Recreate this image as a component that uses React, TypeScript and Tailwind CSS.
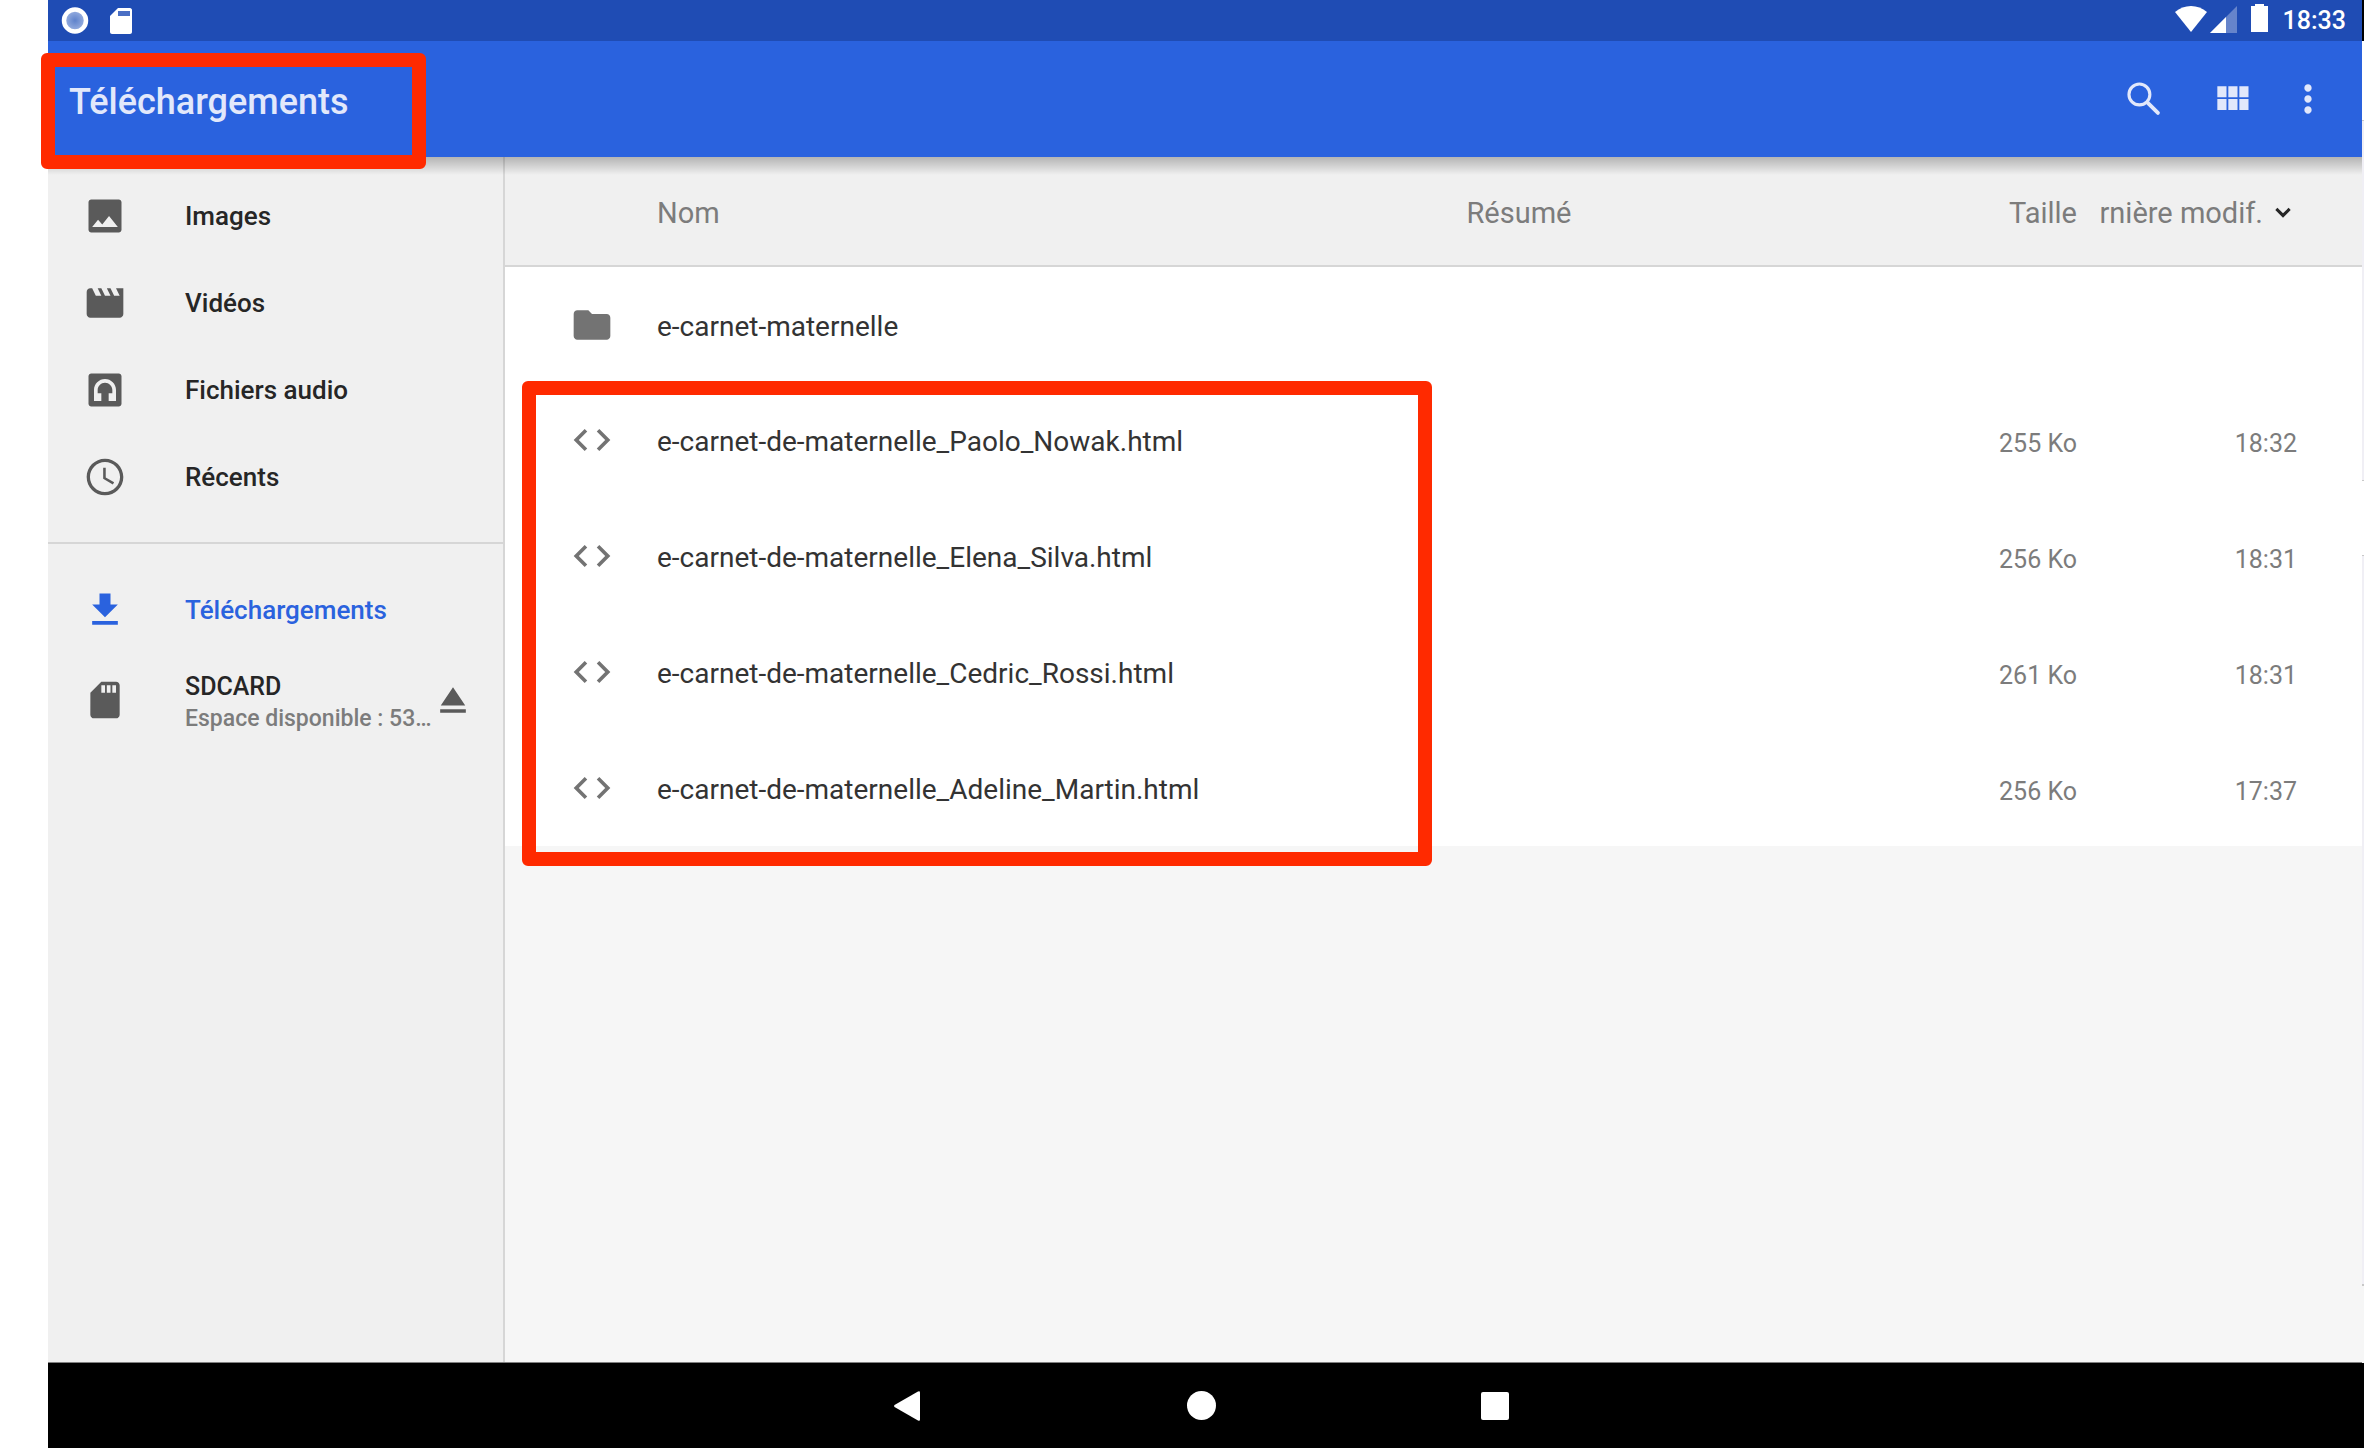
import type { ReactNode } from "react";

type IconProps = { d: string; className?: string };

function Icon({ d, className = "size-11" }: IconProps) {
  return (
    <svg viewBox="0 0 24 24" fill="currentColor" aria-hidden="true" className={`shrink-0 ${className}`}>
      <path d={d} />
    </svg>
  );
}

const icons = {
  photo:
    "M19.500 3h-15C3.700 3 3 3.700 3 4.500v15c0 .8.7 1.500 1.500 1.500h15c.8 0 1.500-.7 1.500-1.500v-15c0-.8-.7-1.500-1.500-1.500zM5 18l3.200-4 2.300 2.700 3.700-4.700L19 18H5z",
  movie: "M18 4l2 4h-3l-2-4h-2l2 4h-3l-2-4H8l2 4H7L5 4H4c-1.100 0-1.990.9-1.990 2L2 18c0 1.100.9 2 2 2h16c1.100 0 2-.9 2-2V4h-4z",
  audio:
    "M19.500 3h-15C3.700 3 3 3.700 3 4.500v15c0 .8.7 1.500 1.500 1.500h15c.8 0 1.500-.7 1.500-1.500v-15c0-.8-.7-1.500-1.500-1.500zM18 18h-4v-4.200h2V12c0-2.200-1.800-4-4-4s-4 1.800-4 4v1.800h2V18H6v-6c0-3.300 2.700-6 6-6s6 2.700 6 6v6z",
  recent:
    "M11.990 2C6.470 2 2 6.480 2 12s4.470 10 9.990 10C17.520 22 22 17.520 22 12S17.520 2 11.990 2zM12 20.200c-4.500 0-8.200-3.700-8.200-8.200s3.700-8.200 8.200-8.200 8.200 3.700 8.200 8.200-3.700 8.200-8.200 8.200zm.4-13.200H11v6l5.250 3.150.75-1.230-4.600-2.670z",
  download: "M19 9h-4V3H9v6H5l7 7 7-7zM5 18v2h14v-2H5z",
  sdcard: "M18 2h-8L4.020 8 4 20c0 1.100.9 2 2 2h12c1.100 0 2-.9 2-2V4c0-1.100-.9-2-2-2zm-6 6h-2V4h2v4zm3 0h-2V4h2v4zm3 0h-2V4h2v4z",
  eject: "M5 17h14v2H5zM12 5L5.330 15h13.340z",
  grid: "M4 11h5V5H4v6zm0 7h5v-6H4v6zm6 0h5v-6h-5v6zm6 0h5v-6h-5v6zm-6-7h5V5h-5v6zm6-6v6h5V5h-5z",
  more: "M12 8c1.100 0 2-.9 2-2s-.9-2-2-2-2 .9-2 2 .9 2 2 2zm0 2c-1.100 0-2 .9-2 2s.9 2 2 2 2-.9 2-2-.9-2-2-2zm0 6c-1.100 0-2 .9-2 2s.9 2 2 2 2-.9 2-2-.9-2-2-2z",
  folder: "M10 4H4c-1.100 0-1.990.9-1.990 2L2 18c0 1.100.9 2 2 2h16c1.100 0 2-.9 2-2V8c0-1.100-.9-2-2-2h-8l-2-2z",
  code: "M9.400 16.600L4.800 12l4.600-4.600L8 6l-6 6 6 6 1.400-1.400zm5.200 0l4.600-4.600-4.600-4.600L16 6l6 6-6 6-1.400-1.400z",
  chevron: "M7.200 7.600L12 12.200l4.800-4.600L18.600 9.500 12 16 5.400 9.500z",
};

const files = [
  { icon: icons.folder, name: "e-carnet-maternelle", size: "", date: "" },
  { icon: icons.code, name: "e-carnet-de-maternelle_Paolo_Nowak.html", size: "255 Ko", date: "18:32" },
  { icon: icons.code, name: "e-carnet-de-maternelle_Elena_Silva.html", size: "256 Ko", date: "18:31" },
  { icon: icons.code, name: "e-carnet-de-maternelle_Cedric_Rossi.html", size: "261 Ko", date: "18:31" },
  { icon: icons.code, name: "e-carnet-de-maternelle_Adeline_Martin.html", size: "256 Ko", date: "17:37" },
];

function StatusBar() {
  return (
    <div className="flex h-[41px] items-center bg-[#1f4cb4] pr-4 pl-3 text-white">
      <svg viewBox="0 0 30 30" className="size-[30px]" aria-hidden="true">
        <defs>
          <radialGradient id="dot">
            <stop offset="0" stopColor="#5f82cb" />
            <stop offset="1" stopColor="#9db3e2" />
          </radialGradient>
        </defs>
        <circle cx="15" cy="14.500" r="11" fill="url(#dot)" stroke="#fff" strokeWidth="4.500" />
      </svg>
      <svg viewBox="0 0 22 26" className="ml-5 h-[26px] w-[22px]" fill="currentColor" aria-hidden="true">
        <path d="M8 0h12c1 0 2 1 2 2v22c0 1-1 2-2 2H2c-1 0-2-1-2-2V8z" />
        <path d="M8 3h12v5H8z" fill="#4a6fc4" />
      </svg>
      <svg viewBox="0 0 32 26" className="mr-[2px] mb-1 ml-auto h-[26px] w-8" fill="currentColor" aria-hidden="true">
        <path d="M16 26L0 6C9-2 23-2 32 6z" />
      </svg>
      <svg viewBox="0 0 28 28" className="mr-[14px] mb-1 size-7" aria-hidden="true">
        <path d="M28 1v27H1z" fill="#6684cb" />
        <path d="M17 12v16H1z" fill="#fff" />
      </svg>
      <svg viewBox="0 0 17 28" className="mr-[15px] mb-[6px] h-7 w-[17px]" fill="currentColor" aria-hidden="true">
        <path d="M4 0h9v2h4v26H0V2h4z" />
      </svg>
      <span className="text-[25px] leading-7 font-medium">18:33</span>
    </div>
  );
}

function NavItem({ icon, label, active = false }: { icon: string; label: string; active?: boolean }) {
  return (
    <li>
      <button
        type="button"
        className={
          active
            ? "flex h-[87px] w-full items-center gap-[58px] pl-[35px] text-[#2a62de]"
            : "flex h-[87px] w-full items-center gap-[58px] pl-[35px] text-[#5a5a5a]"
        }
      >
        <Icon d={icon} />
        <span className={active ? "font-medium" : "font-medium text-[#262626]"}>{label}</span>
      </button>
    </li>
  );
}

function Sidebar() {
  return (
    <nav className="w-[457px] shrink-0 border-r-2 border-[#d6d6d6] bg-[#f0f0f0] pt-[15px] text-[26px] leading-8">
      <ul className="border-b-2 border-[#d6d6d6] pb-[22px]">
        <NavItem icon={icons.photo} label="Images" />
        <NavItem icon={icons.movie} label="Vidéos" />
        <NavItem icon={icons.audio} label="Fichiers audio" />
        <NavItem icon={icons.recent} label="Récents" />
      </ul>
      <ul className="pt-[22px]">
        <NavItem icon={icons.download} label="Téléchargements" active />
        <li className="flex h-[94px] items-center pr-7 pl-[35px] text-[#5a5a5a]">
          <button type="button" className="flex min-w-0 flex-1 items-center gap-[58px] text-left">
            <Icon d={icons.sdcard} />
            <span className="min-w-0 flex-1 pt-1.5">
              <span className="block text-[25px] font-medium text-[#262626]">SDCARD</span>
              <span className="block text-[23px] font-medium whitespace-nowrap text-[#7c7c7c]">
                Espace disponible : 53…
              </span>
            </span>
          </button>
          <button type="button" aria-label="Éjecter">
            <Icon d={icons.eject} />
          </button>
        </li>
      </ul>
    </nav>
  );
}

function ActionButton({ label, children }: { label: string; children: ReactNode }) {
  return (
    <button type="button" aria-label={label} className="flex size-11 items-center justify-center">
      {children}
    </button>
  );
}

function FileTable() {
  return (
    <table className="w-full table-fixed border-collapse text-[29px] leading-9">
      <colgroup>
        <col className="w-[152px]" />
        <col />
        <col className="w-[22%]" />
        <col className="w-[202px]" />
        <col className="w-[285px]" />
      </colgroup>
      <thead>
        <tr className="h-[109px] border-b-2 border-[#d6d6d6] bg-[#f0f0f0] text-left text-[#7c7c7c]">
          <th aria-label="Type" />
          <th className="pt-1 font-normal">Nom</th>
          <th className="pt-1 font-normal">Résumé</th>
          <th className="pt-1 text-right font-normal">Taille</th>
          <th className="pt-1 pr-[65px] pl-[22px] font-normal">
            <button type="button" className="flex w-full items-center justify-end gap-1.5">
              <span className="flex min-w-0 flex-1 justify-end overflow-hidden whitespace-nowrap">Dernière modif.</span>
              <Icon d={icons.chevron} className="size-7 text-[#262626]" />
            </button>
          </th>
        </tr>
      </thead>
      <tbody>
        {files.map((file) => (
          <tr key={file.name} className="h-[116px] bg-white text-[#333333]">
            <td className="pl-[65px] text-[#737373]">
              <Icon d={file.icon} />
            </td>
            <td className="pt-1 text-[28px] whitespace-nowrap">{file.name}</td>
            <td />
            <td className="pt-2 text-right text-[25px] text-[#7c7c7c]">{file.size}</td>
            <td className="pt-2 pr-[65px] text-right text-[25px] text-[#7c7c7c]">{file.date}</td>
          </tr>
        ))}
      </tbody>
    </table>
  );
}

export default function App() {
  return (
    <div className="flex min-h-screen bg-white pl-12 font-[Roboto,sans-serif]">
      <div className="flex min-w-0 flex-1 flex-col">
        <StatusBar />
        <header className="relative z-10 flex h-[116px] items-center bg-[#2a62de] pr-8 pl-[21px] text-[#e2e8fb]">
          <div className="pointer-events-none absolute inset-x-0 top-full h-[18px] bg-linear-to-b from-black/25 to-transparent" />
          <h1 className="pt-1.5 text-[36px] leading-10 font-medium">Téléchargements</h1>
          <div className="ml-auto flex items-center gap-8">
            <div className="mr-3 flex">
              <ActionButton label="Rechercher">
                <svg viewBox="0 0 24 24" className="size-11" fill="none" stroke="currentColor" aria-hidden="true">
                  <circle cx="9.500" cy="9.500" r="5.700" strokeWidth="1.700" />
                  <path d="M14.200 14.200l5.400 5.400" strokeWidth="2.100" strokeLinecap="round" />
                </svg>
              </ActionButton>
            </div>
            <ActionButton label="Vue grille">
              <Icon d={icons.grid} />
            </ActionButton>
            <ActionButton label="Plus d'options">
              <Icon d={icons.more} />
            </ActionButton>
          </div>
          <div className="pointer-events-none absolute top-3 -left-[7px] h-[116px] w-[385px] rounded-md border-[14px] border-[#ff2a00]" />
        </header>
        <div className="flex flex-1">
          <Sidebar />
          <main className="relative min-w-0 flex-1 bg-[#f6f6f6]">
            <FileTable />
            <div className="pointer-events-none absolute top-[224px] left-[17px] h-[485px] w-[49%] rounded-md border-[14px] border-[#ff2a00]" />
          </main>
        </div>
        <footer className="flex h-[86px] items-center justify-center gap-[250px] border-t border-[#808080] bg-black pr-2 text-white">
          <ActionButton label="Retour">
            <svg viewBox="0 0 44 44" className="size-11" fill="currentColor" aria-hidden="true">
              <path d="M9.500 21L33 7.500q2-1 2 1v27q0 2-2 1L9.500 23q-1-1 0-2z" />
            </svg>
          </ActionButton>
          <ActionButton label="Accueil">
            <span className="size-[29px] rounded-full bg-white" />
          </ActionButton>
          <ActionButton label="Applications récentes">
            <span className="size-7 rounded-[2px] bg-white" />
          </ActionButton>
        </footer>
      </div>
      <div className="flex w-[2px] flex-col bg-[#f0eff5]">
        <div className="h-[41px] bg-black" />
        <div className="h-20 border-b border-[#c8c8c8] bg-white" />
        <div className="h-[360px] border-b border-[#c8c8c8]" />
        <div className="h-[75px] border-b border-[#c8c8c8] bg-white" />
        <div className="flex-1 border-b-2 border-[#c8c8c8]" />
        <div className="h-[77px] bg-[#f6f6f6]" />
        <div className="h-[85px] bg-black" />
      </div>
    </div>
  );
}
